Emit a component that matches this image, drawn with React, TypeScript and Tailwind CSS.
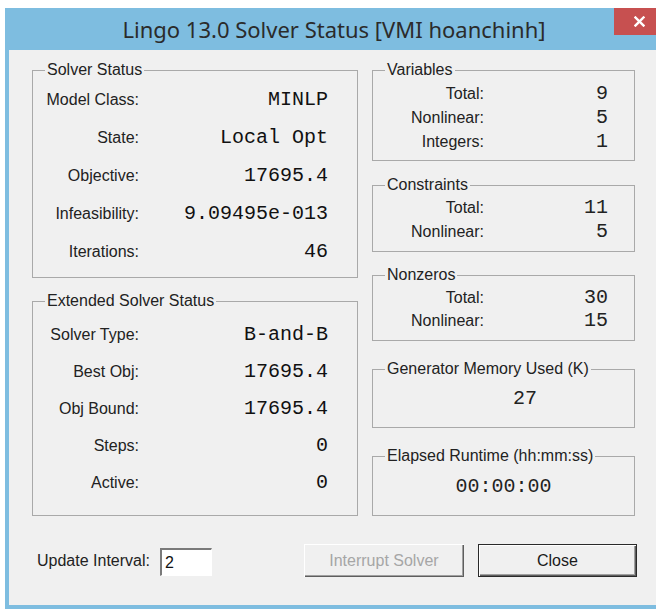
import type { ReactNode } from "react";

const solverStatus = [
  ["Model Class:", "MINLP"],
  ["State:", "Local Opt"],
  ["Objective:", "17695.4"],
  ["Infeasibility:", "9.09495e-013"],
  ["Iterations:", "46"],
];

const extendedStatus = [
  ["Solver Type:", "B-and-B"],
  ["Best Obj:", "17695.4"],
  ["Obj Bound:", "17695.4"],
  ["Steps:", "0"],
  ["Active:", "0"],
];

const variables = [
  ["Total:", "9"],
  ["Nonlinear:", "5"],
  ["Integers:", "1"],
];

const constraints = [
  ["Total:", "11"],
  ["Nonlinear:", "5"],
];

const nonzeros = [
  ["Total:", "30"],
  ["Nonlinear:", "15"],
];

// etched group box with its caption sitting on the top edge
function Group({ title, className, children }: { title: string; className: string; children: ReactNode }) {
  return (
    <fieldset className={`border border-[#a9a9a9] ${className}`}>
      <legend className="ml-[12px] px-[2px] text-[16px] leading-[18px] text-[#222]">{title}</legend>
      {children}
    </fieldset>
  );
}

function StatusRow({ label, value, tall }: { label: string; value: string; tall?: boolean }) {
  return (
    <div className={`flex items-center ${tall ? "h-[38px]" : "h-[37px]"}`}>
      <span className="w-[106px] text-right text-[16px] text-[#222]">{label}</span>
      <span className="flex-1 pr-[29px] text-right font-['Courier_New','Liberation_Mono',monospace] text-[20px] text-[#111]">
        {value}
      </span>
    </div>
  );
}

function CountRow({ label, value, h }: { label: string; value: string; h: string }) {
  return (
    <div className={`flex items-center ${h}`}>
      <span className="w-[111px] text-right text-[16px] text-[#222]">{label}</span>
      <span className="flex-1 pr-[26px] text-right font-['Courier_New','Liberation_Mono',monospace] text-[20px] text-[#222]">
        {value}
      </span>
    </div>
  );
}

export default function App() {
  return (
    <div className="flex h-[609px] w-[656px] overflow-hidden bg-white pl-[5px] pt-[8px] font-['Liberation_Sans',Arial,sans-serif]">
      <div className="flex w-[651px] flex-col bg-[#7ebde0] pb-[4px] pl-[4px]">
        {/* title bar */}
        <div className="flex h-[42px]">
          <div className="w-[45px]" />
          <div className="flex-1 pt-[6px] text-center font-['Noto_Sans',sans-serif] text-[22px] leading-[30px] text-[#2b2b2b]">
            Lingo 13.0 Solver Status [VMI hoanchinh]
          </div>
          <button className="flex h-[27px] w-[42px] items-center justify-center bg-[#c75050] pl-[8px]">
            <svg width="11" height="11" viewBox="0 0 11 11" stroke="white" strokeWidth="2.4" strokeLinecap="square">
              <line x1="1.5" y1="1.5" x2="9.5" y2="9.5" />
              <line x1="9.5" y1="1.5" x2="1.5" y2="9.5" />
            </svg>
          </button>
        </div>

        {/* client area */}
        <div className="flex flex-1 flex-col bg-[#f0f0f0] pl-[23px] pt-[11px]">
          <div className="flex gap-[14px]">
            <div className="flex w-[326px] flex-col gap-[14px]">
              <Group title="Solver Status" className="h-[217px] pt-[2px]">
                {solverStatus.map(([l, v]) => (
                  <StatusRow key={l} label={l} value={v} tall />
                ))}
              </Group>
              <Group title="Extended Solver Status" className="h-[224px] pt-[6px]">
                {extendedStatus.map(([l, v]) => (
                  <StatusRow key={l} label={l} value={v} />
                ))}
              </Group>
            </div>

            <div className="flex w-[263px] flex-col">
              <Group title="Variables" className="h-[100px] pt-[3px]">
                {variables.map(([l, v]) => (
                  <CountRow key={l} label={l} value={v} h="h-[24px]" />
                ))}
              </Group>
              <Group title="Constraints" className="mt-[15px] h-[76px] pt-[2px]">
                {constraints.map(([l, v]) => (
                  <CountRow key={l} label={l} value={v} h="h-[24px]" />
                ))}
              </Group>
              <Group title="Nonzeros" className="mt-[14px] h-[75px] pt-[2px]">
                {nonzeros.map(([l, v]) => (
                  <CountRow key={l} label={l} value={v} h="h-[23px]" />
                ))}
              </Group>
              <Group title="Generator Memory Used (K)" className="mt-[19px] h-[68px] pt-[9px]">
                <div className="flex h-[24px] items-center pl-[140px] font-['Courier_New','Liberation_Mono',monospace] text-[20px] text-[#222]">
                  27
                </div>
              </Group>
              <Group title="Elapsed Runtime (hh:mm:ss)" className="mt-[19px] h-[69px] pt-[10px]">
                <div className="flex h-[24px] items-center justify-center font-['Courier_New','Liberation_Mono',monospace] text-[20px] text-[#222]">
                  00:00:00
                </div>
              </Group>
            </div>
          </div>

          {/* bottom controls */}
          <div className="mt-[28px] flex h-[33px] items-center">
            <span className="ml-[5px] text-[16px] text-[#222]">Update Interval:</span>
            <div className="ml-[10px] mt-[3px] flex h-[28px] w-[52px] items-center border-b border-l-2 border-r border-t-2 border-b-white border-l-[#7a7a7a] border-r-white border-t-[#7a7a7a] bg-white pl-[3px] text-[16px] text-[#111]">
              2
            </div>
            <button
              disabled
              className="ml-[92px] h-[33px] w-[160px] bg-[#f0f0f0] text-[16px] text-[#a6a6a6] shadow-[inset_1px_1px_0_#ffffff,inset_-1px_-1px_0_#5e5e5e,inset_-2px_-2px_0_#a0a0a0]"
            >
              Interrupt Solver
            </button>
            <button className="ml-[14px] h-[33px] w-[159px] border border-[#2a2a2a] bg-[#f0f0f0] text-[16px] text-[#1a1a1a] shadow-[inset_1px_1px_0_#ffffff,inset_-1px_-1px_0_#5e5e5e,inset_-2px_-2px_0_#a0a0a0]">
              Close
            </button>
          </div>
        </div>
      </div>
    </div>
  );
}
